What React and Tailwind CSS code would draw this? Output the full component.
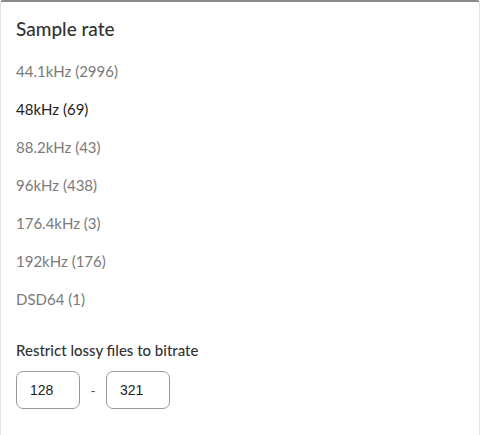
export default function App() {
  const rates = [
    { label: "44.1kHz (2996)", active: false },
    { label: "48kHz (69)", active: true },
    { label: "88.2kHz (43)", active: false },
    { label: "96kHz (438)", active: false },
    { label: "176.4kHz (3)", active: false },
    { label: "192kHz (176)", active: false },
    { label: "DSD64 (1)", active: false },
  ];

  return (
    <div className="h-[435px] w-[480px] bg-white font-['Lato',sans-serif]">
      <div className="h-full rounded-t-[3px] border-t-2 border-x border-t-[#8a8a8a] border-x-[#e4e4e4] bg-white px-[15px]">
        <h2 className="pt-[14px] text-[19px] leading-[26px] font-medium text-[#333]">Sample rate</h2>
        <ul className="mt-[10px]">
          {rates.map((r) => (
            <li
              key={r.label}
              className={`flex h-[38px] items-center text-[15px] ${r.active ? "text-[#222]" : "text-[#7a7a7a]"}`}
            >
              {r.label}
            </li>
          ))}
        </ul>
        <p className="mt-[22px] text-[15px] leading-[20px] font-medium text-[#333]">Restrict lossy files to bitrate</p>
        <div className="mt-[11px] flex items-center">
          <input
            className="h-[38px] w-[64px] rounded-[7px] border border-[#999] px-[13px] font-['Liberation_Sans',sans-serif] text-[14px] text-[#222] outline-none"
            defaultValue="128"
          />
          <span className="w-[26px] text-center text-[14px] text-[#555]">-</span>
          <input
            className="h-[38px] w-[64px] rounded-[7px] border border-[#999] px-[13px] font-['Liberation_Sans',sans-serif] text-[14px] text-[#222] outline-none"
            defaultValue="321"
          />
        </div>
      </div>
    </div>
  );
}
